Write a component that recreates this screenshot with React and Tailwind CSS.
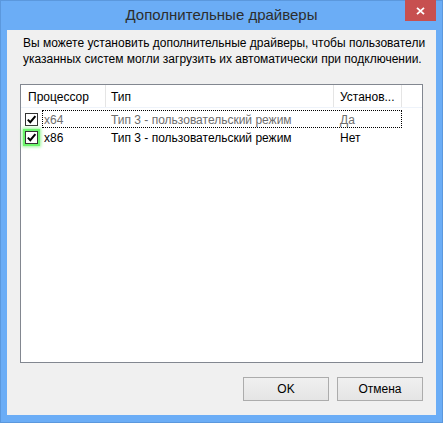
import React from 'react';

const rows = [
  { cpu: 'x64', type: 'Тип 3 - пользовательский режим', installed: 'Да', checked: true, dim: true, focused: true },
  { cpu: 'x86', type: 'Тип 3 - пользовательский режим', installed: 'Нет', checked: true, dim: false, glow: true },
];

const CheckBox = ({ checked, glow }) => (
  <div className={`w-[13px] h-[13px] border border-[#333333] bg-white flex items-center justify-center ${glow ? 'shadow-[0_0_0_2px_#6cf56c,0_0_3px_3px_#9bf59b]' : ''}`}>
    {checked && (
      <svg width="11" height="11" viewBox="0 0 11 11">
        <path d="M1.8 5.6 L4.3 8.2 L9.4 2.2" stroke="#000" strokeWidth="2" fill="none" />
      </svg>
    )}
  </div>
);

const App = () => {
  return (
    <div className="w-[443px] h-[423px] bg-[#6badf6] border border-[#5b98dd] flex flex-col font-['Liberation_Sans',Arial,sans-serif] text-[12px] text-black whitespace-nowrap">
      {/* Title bar */}
      <div className="h-[29px] relative flex items-center justify-center">
        <span className="text-[15px] text-[#2d2d2d]">Дополнительные драйверы</span>
        <div className="absolute -top-px right-[6px] w-[31px] h-[21px] bg-[#c75050] flex items-center justify-center">
          <svg width="9" height="8" viewBox="0 0 9 8">
            <path d="M1 0.8 L8 7.2 M8 0.8 L1 7.2" stroke="#fff" strokeWidth="1.8" />
          </svg>
        </div>
      </div>

      {/* Client area */}
      <div className="flex-1 mx-[6px] mb-[7px] bg-[#f0f0f0] flex flex-col">
        <p className="pt-[5px] pl-[16px] leading-[16px]">
          Вы можете установить дополнительные драйверы, чтобы пользователи<br />
          указанных систем могли загрузить их автоматически при подключении.
        </p>

        {/* List */}
        <div className="mt-[17px] mx-[13px] h-[279px] bg-white border border-[#828790]">
          <div className="flex h-[23px] border-b border-[#eef3fa]">
            <div className="w-[85px] pl-[7px] pt-[2px] flex items-center border-r border-[#e5e5e5]">Процессор</div>
            <div className="w-[228px] pl-[5px] pt-[2px] flex items-center border-r border-[#e5e5e5]">Тип</div>
            <div className="w-[68px] pl-[6px] pt-[2px] flex items-center border-r border-[#e5e5e5]">Установ...</div>
            <div className="flex-1" />
          </div>
          <div className="pt-[2px]">
            {rows.map((r) => (
              <div key={r.cpu} className={`flex h-[18px] items-center ${r.dim ? 'text-[#6d6d6d]' : 'text-black'}`}>
                <div className="w-[21px] pl-[4px] flex items-center">
                  <CheckBox checked={r.checked} glow={r.glow} />
                </div>
                <div className={`w-[360px] h-[18px] pt-[2px] flex items-center border border-dotted ${r.focused ? 'border-black' : 'border-transparent'}`}>
                  <div className="w-[63px] pl-px">{r.cpu}</div>
                  <div className="w-[229px] pl-[5px]">{r.type}</div>
                  <div className="flex-1 pl-[5px]">{r.installed}</div>
                </div>
              </div>
            ))}
          </div>
        </div>

        {/* Buttons */}
        <div className="flex justify-end gap-[8px] mt-[14px] mr-[13px]">
          <button className="w-[86px] h-[24px] border border-[#acacac] bg-gradient-to-b from-[#f0f0f0] to-[#e5e5e5]">OK</button>
          <button className="w-[86px] h-[24px] border border-[#acacac] bg-gradient-to-b from-[#f0f0f0] to-[#e5e5e5]">Отмена</button>
        </div>
      </div>
    </div>
  );
};

export default App;
